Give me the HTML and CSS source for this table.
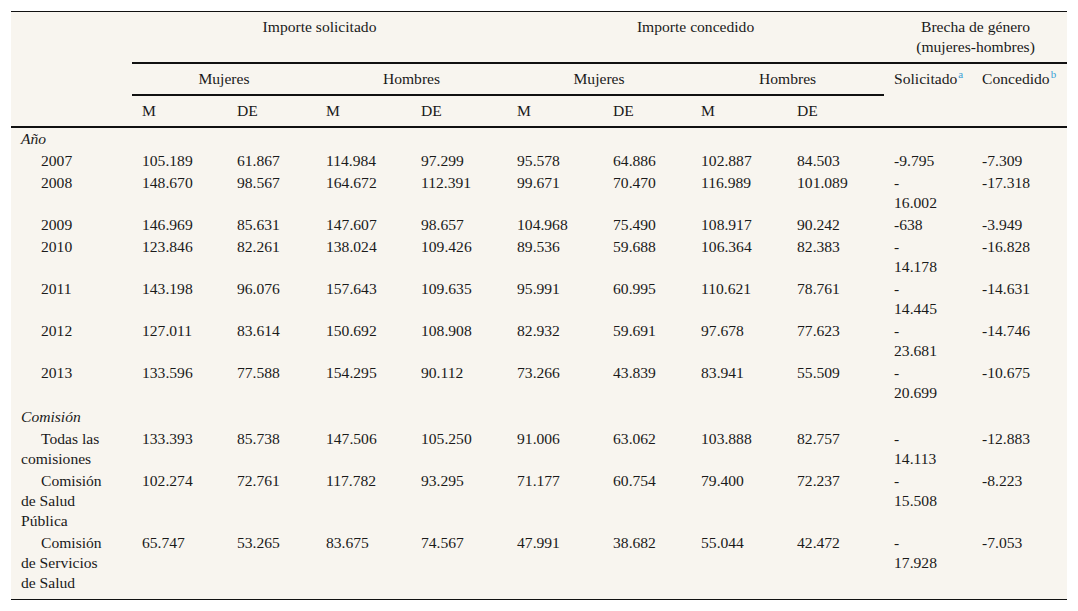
FILE: index.html
```html
<!DOCTYPE html>
<html lang="es">
<head>
<meta charset="utf-8">
<title>Tabla</title>
<link rel="stylesheet" href="styles.css">
</head>
<body>
<div class="page">
<table class="data">
  <colgroup>
    <col class="c0"><col class="c1"><col class="c2"><col class="c3"><col class="c4"><col class="c5"><col class="c6"><col class="c7"><col class="c8"><col class="c9"><col class="c10">
  </colgroup>
  <thead>
    <tr>
      <th rowspan="3" class="corner"></th>
      <th colspan="4" class="group">Importe solicitado</th>
      <th colspan="4" class="group">Importe concedido</th>
      <th colspan="2" class="group">Brecha de género<br>(mujeres-hombres)</th>
    </tr>
    <tr>
      <th colspan="2" class="group">Mujeres</th>
      <th colspan="2" class="group">Hombres</th>
      <th colspan="2" class="group">Mujeres</th>
      <th colspan="2" class="group">Hombres</th>
      <th rowspan="2" class="last">Solicitado<sup>a</sup></th>
      <th rowspan="2" class="last">Concedido<sup>b</sup></th>
    </tr>
    <tr>
      <th class="last">M</th><th class="last">DE</th>
      <th class="last">M</th><th class="last">DE</th>
      <th class="last">M</th><th class="last">DE</th>
      <th class="last">M</th><th class="last">DE</th>
    </tr>
  </thead>
  <tbody>
    <tr class="section"><td colspan="11"><em>Año</em></td></tr>
    <tr><td class="lab">2007</td><td>105.189</td><td>61.867</td><td>114.984</td><td>97.299</td><td>95.578</td><td>64.886</td><td>102.887</td><td>84.503</td><td>-9.795</td><td>-7.309</td></tr>
    <tr><td class="lab">2008</td><td>148.670</td><td>98.567</td><td>164.672</td><td>112.391</td><td>99.671</td><td>70.470</td><td>116.989</td><td>101.089</td><td>-<br>16.002</td><td>-17.318</td></tr>
    <tr><td class="lab">2009</td><td>146.969</td><td>85.631</td><td>147.607</td><td>98.657</td><td>104.968</td><td>75.490</td><td>108.917</td><td>90.242</td><td>-638</td><td>-3.949</td></tr>
    <tr><td class="lab">2010</td><td>123.846</td><td>82.261</td><td>138.024</td><td>109.426</td><td>89.536</td><td>59.688</td><td>106.364</td><td>82.383</td><td>-<br>14.178</td><td>-16.828</td></tr>
    <tr><td class="lab">2011</td><td>143.198</td><td>96.076</td><td>157.643</td><td>109.635</td><td>95.991</td><td>60.995</td><td>110.621</td><td>78.761</td><td>-<br>14.445</td><td>-14.631</td></tr>
    <tr><td class="lab">2012</td><td>127.011</td><td>83.614</td><td>150.692</td><td>108.908</td><td>82.932</td><td>59.691</td><td>97.678</td><td>77.623</td><td>-<br>23.681</td><td>-14.746</td></tr>
    <tr><td class="lab">2013</td><td>133.596</td><td>77.588</td><td>154.295</td><td>90.112</td><td>73.266</td><td>43.839</td><td>83.941</td><td>55.509</td><td>-<br>20.699</td><td>-10.675</td></tr>
    <tr class="section gap"><td colspan="11"><em>Comisión</em></td></tr>
    <tr><td class="lab">Todas las<br>comisiones</td><td>133.393</td><td>85.738</td><td>147.506</td><td>105.250</td><td>91.006</td><td>63.062</td><td>103.888</td><td>82.757</td><td>-<br>14.113</td><td>-12.883</td></tr>
    <tr><td class="lab">Comisión<br>de Salud<br>Pública</td><td>102.274</td><td>72.761</td><td>117.782</td><td>93.295</td><td>71.177</td><td>60.754</td><td>79.400</td><td>72.237</td><td>-<br>15.508</td><td>-8.223</td></tr>
    <tr class="end"><td class="lab">Comisión<br>de Servicios<br>de Salud</td><td>65.747</td><td>53.265</td><td>83.675</td><td>74.567</td><td>47.991</td><td>38.682</td><td>55.044</td><td>42.472</td><td>-<br>17.928</td><td>-7.053</td></tr>
  </tbody>
</table>
</div>
</body>
</html>
```

FILE: styles.css
```css
html, body {
  margin: 0;
  padding: 0;
  background: #ffffff;
}

.page {
  padding: 11px 11px 0 11px;
}

.data {
  width: 1056px;
  table-layout: fixed;
  border-collapse: separate;
  border-spacing: 0;
  background: #f8f5ef;
  color: #1a1a1a;
  font-family: "Liberation Serif", "Times New Roman", serif;
  font-size: 15.6px;
  line-height: 20px;
  border-top: 1px solid #111;
  border-bottom: 1px solid #111;
}

.c0 { width: 121px; }
.c1 { width: 95px; }
.c2 { width: 89px; }
.c3 { width: 95px; }
.c4 { width: 96px; }
.c5 { width: 96px; }
.c6 { width: 88px; }
.c7 { width: 96px; }
.c8 { width: 97px; }
.c9 { width: 88px; }
.c10 { width: 95px; }

.data th {
  font-weight: normal;
  padding: 5px 10px;
  vertical-align: top;
  text-align: left;
}

.data th.group {
  text-align: center;
  border-bottom: 2px solid #111;
}

.data th.last,
.data th.corner {
  border-bottom: 2px solid #111;
}

.data sup {
  font-size: 11px;
  line-height: 0;
  color: #3a9fd6;
  vertical-align: 6px;
  margin-left: 1px;
}

.data td {
  padding: 1px 10px;
  vertical-align: top;
  text-align: left;
  white-space: nowrap;
}

.data td.lab {
  text-indent: 20px;
}

.data tr.gap td {
  padding-top: 3px;
}

.data tr.end td {
  padding-bottom: 6px;
}
```
